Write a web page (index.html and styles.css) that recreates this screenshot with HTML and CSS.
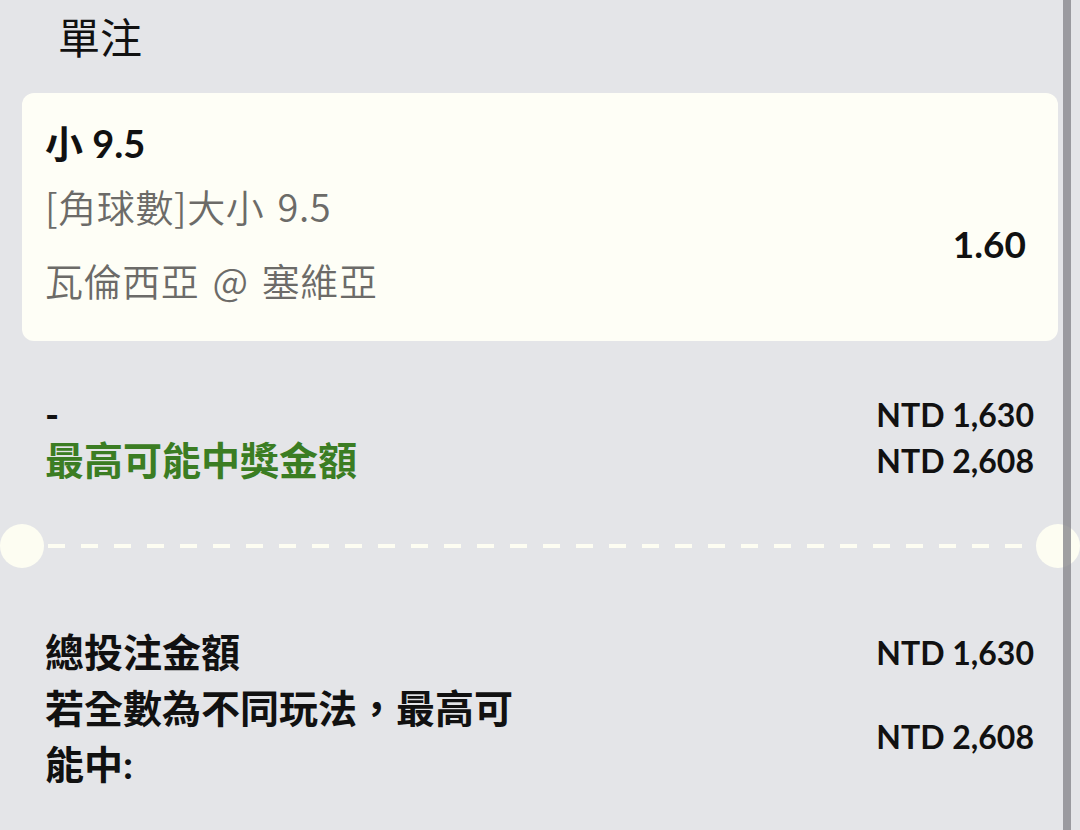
FILE: index.html
```html
<!DOCTYPE html>
<html lang="zh-Hant">
<head>
    <meta charset="UTF-8">
    <meta name="viewport" content="width=device-width, initial-scale=1.0">
    <title>單注</title>
    <link rel="stylesheet" href="styles.css">
</head>
<body>
    <div class="page">
        <h2 class="title">單注</h2>

        <div class="bet-card">
            <div class="pick">小 9.5</div>
            <div class="bet-row">
                <div class="bet-info">
                    <div class="market">[角球數]大小 9.5</div>
                    <div class="match">瓦倫西亞 @ 塞維亞</div>
                </div>
                <div class="odds">1.60</div>
            </div>
        </div>

        <div class="stake">
            <div class="line">
                <span class="dash">-</span>
                <span class="amount">NTD 1,630</span>
            </div>
            <div class="line">
                <span class="win">最高可能中獎金額</span>
                <span class="amount">NTD 2,608</span>
            </div>
        </div>

        <div class="tear">
            <span class="notch"></span>
            <span class="dashes"></span>
            <span class="notch"></span>
        </div>

        <div class="summary">
            <div class="sum-row">
                <span class="label">總投注金額</span>
                <span class="amount">NTD 1,630</span>
            </div>
            <div class="sum-row">
                <span class="label">若全數為不同玩法，最高可能中:</span>
                <span class="amount">NTD 2,608</span>
            </div>
        </div>
    </div>
    <div class="side-line"></div>
</body>
</html>
```

FILE: styles.css
```css
body {
    margin: 0;
    background-color: #e4e5e8;
    font-family: "Lato", "Noto Sans CJK TC", sans-serif;
    color: #111;
    overflow: hidden;
}

.page {
    width: 1080px;
    padding-top: 8px;
}

.title {
    margin: 0;
    padding-left: 58px;
    font-size: 42px;
    font-weight: normal;
    line-height: 56px;
    font-family: "Noto Sans CJK TC", sans-serif;
}

.bet-card {
    margin: 29px 22px 0 22px;
    padding: 26px 32px 37px 23px;
    background-color: #fefef6;
    border-radius: 12px;
}

.pick {
    font-size: 38px;
    font-weight: bold;
    line-height: 48px;
}

.bet-row {
    display: flex;
    justify-content: space-between;
    align-items: center;
    margin-top: 15px;
}

.market, .match {
    font-family: "Noto Sans CJK TC", sans-serif;
    font-size: 38px;
    font-weight: 350;
    line-height: 48px;
    word-spacing: 4px;
    letter-spacing: 0.6px;
    color: #6c6b68;
}

.match {
    margin-top: 26px;
}

.odds {
    font-size: 37px;
    font-weight: bold;
}

.stake {
    margin-top: 50px;
    padding: 0 46px 0 45px;
}

.line {
    display: flex;
    justify-content: space-between;
    align-items: center;
    height: 46px;
}

.dash {
    font-size: 38px;
    font-weight: bold;
}

.win {
    font-size: 39px;
    font-weight: bold;
    line-height: 40px;
    color: #3b7d23;
}

.amount {
    font-size: 32px;
    font-weight: bold;
}

.tear {
    display: flex;
    align-items: center;
    margin-top: 41px;
}

.notch {
    width: 44px;
    height: 44px;
    border-radius: 50%;
    background-color: #fdfdf2;
    flex-shrink: 0;
}

.dashes {
    flex: 1;
    height: 4px;
    margin: 0 4px;
    background: repeating-linear-gradient(to right, #fdfdf2 0 17px, transparent 17px 33px);
}

.summary {
    margin-top: 56px;
    padding: 0 46px 0 45px;
}

.sum-row {
    display: flex;
    justify-content: space-between;
    align-items: center;
}

.label {
    max-width: 475px;
    font-size: 39px;
    font-weight: bold;
    line-height: 56px;
}

.side-line {
    position: fixed;
    top: 0;
    bottom: 0;
    right: 9px;
    width: 8px;
    background-color: rgba(135, 135, 140, 0.8);
}
```
